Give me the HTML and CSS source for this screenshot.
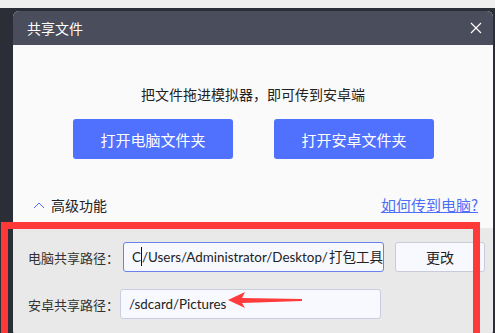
FILE: index.html
```html
<!DOCTYPE html>
<html lang="zh-CN">
  <head>
    <meta charset="UTF-8" />
    <meta name="viewport" content="width=device-width, initial-scale=1.0" />
    <title>共享文件</title>
    <link rel="stylesheet" href="styles.css">
  </head>
  <body>
    <div class="topbar"></div>
    <div class="desk">
      <div class="dialog">
        <div class="header">
          <span class="title">共享文件</span>
          <svg class="close" width="12" height="12" viewBox="0 0 12 12">
            <path d="M1 1L11 11M11 1L1 11" stroke="#fff" stroke-width="1.2" fill="none" />
          </svg>
        </div>
        <div class="main">
          <p class="hint">把文件拖进模拟器，即可传到安卓端</p>
          <div class="buttons">
            <button class="primary">打开电脑文件夹</button>
            <button class="primary">打开安卓文件夹</button>
          </div>
          <div class="advanced">
            <span class="toggle">
              <svg width="12" height="8" viewBox="0 0 12 8">
                <polyline points="1,7 6,2 11,7" stroke="#4f6ef7" stroke-width="1" fill="none" />
              </svg>
              高级功能
            </span>
            <a class="help" href="#">如何传到电脑?</a>
          </div>
        </div>
        <div class="paths">
          <div class="row">
            <span class="label">电脑共享路径：</span>
            <div class="field active">C<span class="caret"></span>/Users/Administrator/Desktop/<span class="cjk">打包工具</span></div>
            <button class="change">更改</button>
          </div>
          <div class="row">
            <span class="label">安卓共享路径：</span>
            <div class="field second">/sdcard/Pictures</div>
          </div>
        </div>
      </div>
    </div>

    <!-- annotation drawn over the screenshot -->
    <div class="mark"></div>
    <svg class="arrow" width="76" height="18" viewBox="0 0 76 18">
      <polygon points="0,9 17,1 14,7 74,8 74,10 14,12 17,17" fill="#ff3b3b" />
    </svg>
  </body>
</html>
```

FILE: styles.css
```css
body {
  margin: 0;
  width: 495px;
  height: 333px;
  overflow: hidden;
  background: #2b2e37;
  font-family: "Noto Sans CJK SC", "Noto Sans", sans-serif;
  position: relative;
}
.topbar {
  height: 8px;
  background: #efefef;
}
.desk {
  padding: 3px 2px 0 13px;
}
.dialog {
  background: #fafafa;
  border-radius: 6px;
  overflow: hidden;
  height: 325px;
}
.header {
  height: 34px;
  background: #4a4d5b;
  display: flex;
  align-items: center;
  justify-content: space-between;
  padding: 0 11px 0 14px;
}
.title {
  color: #fff;
  font-size: 14px;
}
.main {
  height: 183px;
  box-sizing: border-box;
  padding-top: 38px;
}
.hint {
  margin: 0;
  text-align: center;
  font-size: 14px;
  line-height: 22px;
  color: #222;
}
.buttons {
  display: flex;
  gap: 41px;
  margin: 14px 0 0 60px;
}
.primary {
  width: 160px;
  height: 40px;
  border: none;
  border-radius: 3px;
  background: #5070fe;
  color: #fff;
  font-family: inherit;
  font-size: 15px;
}
.advanced {
  display: flex;
  justify-content: space-between;
  align-items: center;
  margin: 35px 0 0 20px;
  padding-right: 15px;
  font-size: 14px;
}
.toggle {
  display: flex;
  align-items: center;
  gap: 6px;
  color: #222;
}
.help {
  color: #4f6ef7;
  font-size: 15px;
}
.paths {
  background: #e9e9e9;
  height: 120px;
  padding: 14px 0 0 15px;
  box-sizing: border-box;
}
.row {
  display: flex;
  align-items: center;
  margin-bottom: 17px;
}
.label {
  width: 92px;
  font-size: 13px;
  color: #333;
}
.field {
  width: 261px;
  height: 30px;
  box-sizing: border-box;
  border: 1px solid #c9cde0;
  border-radius: 3px;
  background: #f7f9ff;
  padding-left: 8px;
  font-family: Lato, "Noto Sans CJK SC", sans-serif;
  font-size: 13.4px;
  line-height: 28px;
  color: #222;
  white-space: nowrap;
  overflow: hidden;
}
.field.active {
  margin-left: 3px;
  border-color: #6a82ee;
}
.cjk {
  font-size: 13.5px;
  margin-left: 1px;
}
.caret {
  display: inline-block;
  width: 1px;
  height: 19px;
  background: #111;
  vertical-align: -4px;
}
.change {
  margin-left: 11px;
  width: 90px;
  height: 30px;
  border: 1px solid #c8ccd8;
  border-radius: 3px;
  background: #f7f9ff;
  font-family: inherit;
  font-size: 14px;
  color: #222;
}
.mark {
  position: absolute;
  left: 1px;
  top: 222px;
  width: 479px;
  height: 120px;
  box-sizing: border-box;
  border: 7px solid #ff3838;
}
.arrow {
  position: absolute;
  left: 228px;
  top: 291px;
}
```
